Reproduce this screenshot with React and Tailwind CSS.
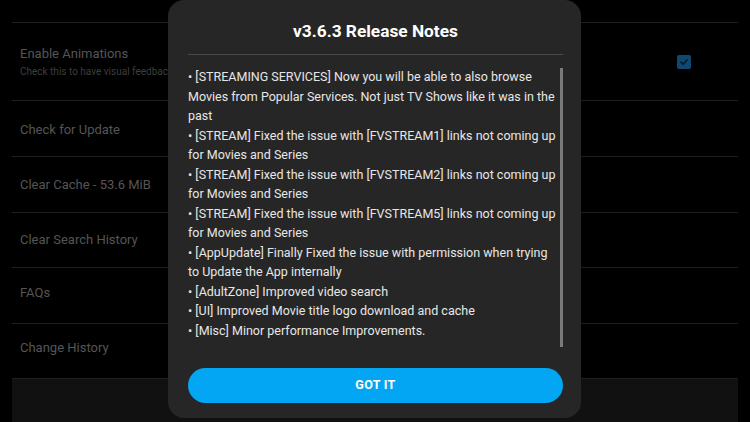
import React from "react";

const settings = [
  { title: "Enable Animations", sub: "Check this to have visual feedback when navigating", checked: true, h: "h-[78px]" },
  { title: "Check for Update", h: "h-[56px] pt-[2px]" },
  { title: "Clear Cache - 53.6 MiB", h: "h-[56px]" },
  { title: "Clear Search History", h: "h-[55px]" },
  { title: "FAQs", h: "h-[56px] pb-[6px]" },
  { title: "Change History", h: "h-[55px] pb-[6px]" },
];

const notes = [
  "[STREAMING SERVICES] Now you will be able to also browse Movies from Popular Services. Not just TV Shows like it was in the past",
  "[STREAM] Fixed the issue with [FVSTREAM1] links not coming up for Movies and Series",
  "[STREAM] Fixed the issue with [FVSTREAM2] links not coming up for Movies and Series",
  "[STREAM] Fixed the issue with [FVSTREAM5] links not coming up for Movies and Series",
  "[AppUpdate] Finally Fixed the issue with permission when trying to Update the App internally",
  "[AdultZone] Improved video search",
  "[UI] Improved Movie title logo download and cache",
  "[Misc] Minor performance Improvements.",
];

function SettingRow({ item }) {
  return (
    <div className={`flex items-center justify-between border-t border-[#1f1f1f] pl-2 pr-[47px] ${item.h}`}>
      <div className="flex flex-col">
        <span className="text-[13px] leading-[18px] text-[#555]">{item.title}</span>
        {item.sub && (
          <span className="mt-[2px] text-[10px] leading-[14px] text-[#3e3e3e]">{item.sub}</span>
        )}
      </div>
      {item.checked && (
        <div className="flex h-[14px] w-[14px] items-center justify-center rounded-[2px] bg-[#0f4870]">
          <svg width="10" height="10" viewBox="0 0 10 10" fill="none">
            <path d="M2 5.2 L4.1 7.2 L8.2 2.8" stroke="#071a2a" strokeWidth="1.6" strokeLinecap="round" strokeLinejoin="round" />
          </svg>
        </div>
      )}
    </div>
  );
}

export default function App() {
  return (
    <div
      className="relative h-[422px] w-[750px] overflow-hidden bg-black"
      style={{ fontFamily: "Roboto, 'Noto Sans', sans-serif" }}
    >
      {/* settings list behind the dialog */}
      <div className="flex h-full flex-col px-3 pt-[22px]">
        {settings.map((s) => (
          <SettingRow key={s.title} item={s} />
        ))}
        <div className="flex-1 border-t border-[#1f1f1f] bg-[#111]" />
      </div>

      {/* release notes dialog */}
      <div className="absolute left-[168px] top-0 flex h-[418px] w-[413px] flex-col rounded-[16px] bg-[#262626] pl-5 pr-[18px]">
        <h2 className="pt-[19px] text-center text-[17.3px] font-bold leading-[24px] text-white">
          v3.6.3 Release Notes
        </h2>
        <div className="mt-[11px] h-px bg-[#4a4a4a]" />
        <div className="mt-[12px] flex h-[282px]">
          <ul className="flex-1 text-[12.5px] leading-[19.5px] text-[#e6e6e6]">
            {notes.map((n) => (
              <li key={n}>• {n}</li>
            ))}
          </ul>
          <div className="mt-[1px] h-[279px] w-[3px] bg-[#7a7a7a]" />
        </div>
        <button className="mt-[19px] h-[35px] w-full rounded-full bg-[#03a6f3] text-[12.5px] font-bold tracking-wide text-white">
          GOT IT
        </button>
      </div>
    </div>
  );
}
